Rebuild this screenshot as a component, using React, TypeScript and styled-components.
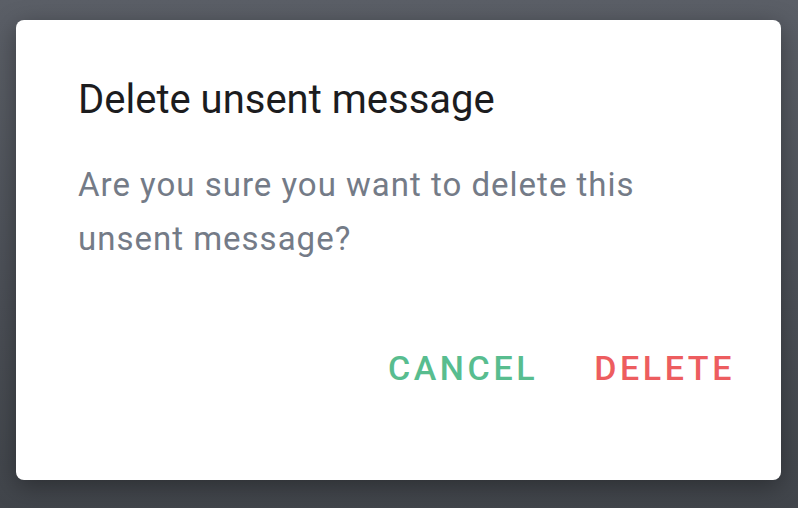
import React from "react";
import styled, { createGlobalStyle } from "styled-components";

const Global = createGlobalStyle`
  html, body { margin: 0; padding: 0; }
  body {
    width: 798px;
    height: 508px;
    overflow: hidden;
    font-family: Roboto, "Noto Sans", sans-serif;
  }
`;

const Backdrop = styled.div`
  box-sizing: border-box;
  width: 798px;
  height: 508px;
  padding: 20px 17px 28px 16px;
  background: linear-gradient(180deg, #5b5f67 0%, #4b4f56 60%, #41454b 100%);
`;

const Dialog = styled.div`
  box-sizing: border-box;
  height: 460px;
  background: #ffffff;
  border-radius: 8px;
  box-shadow: 0 6px 24px rgba(0, 0, 0, 0.35);
  padding: 52px 46px 0 62px;
  display: flex;
  flex-direction: column;
`;

const Title = styled.h2`
  margin: 0;
  font-size: 40px;
  line-height: 56px;
  font-weight: 400;
  color: #1c1c1e;
`;

const Body = styled.p`
  margin: 30px 0 0;
  font-size: 33px;
  line-height: 54px;
  letter-spacing: 1px;
  font-weight: 400;
  color: #747b87;
  max-width: 600px;
`;

const Actions = styled.div`
  display: flex;
  justify-content: flex-end;
  gap: 56px;
  margin-top: 80px;
`;

const ActionButton = styled.button<{ $tone: string }>`
  border: none;
  background: none;
  padding: 0;
  font-family: Roboto, sans-serif;
  font-size: 34px;
  font-weight: 500;
  letter-spacing: 3.6px;
  line-height: 44px;
  color: ${(p) => p.$tone};
  cursor: pointer;
`;

export default function App() {
  return (
    <>
      <Global />
      <Backdrop>
        <Dialog>
          <Title>Delete unsent message</Title>
          <Body>Are you sure you want to delete this unsent message?</Body>
          <Actions>
            <ActionButton $tone="#58bd8f">CANCEL</ActionButton>
            <ActionButton $tone="#ed5d5f">DELETE</ActionButton>
          </Actions>
        </Dialog>
      </Backdrop>
    </>
  );
}
